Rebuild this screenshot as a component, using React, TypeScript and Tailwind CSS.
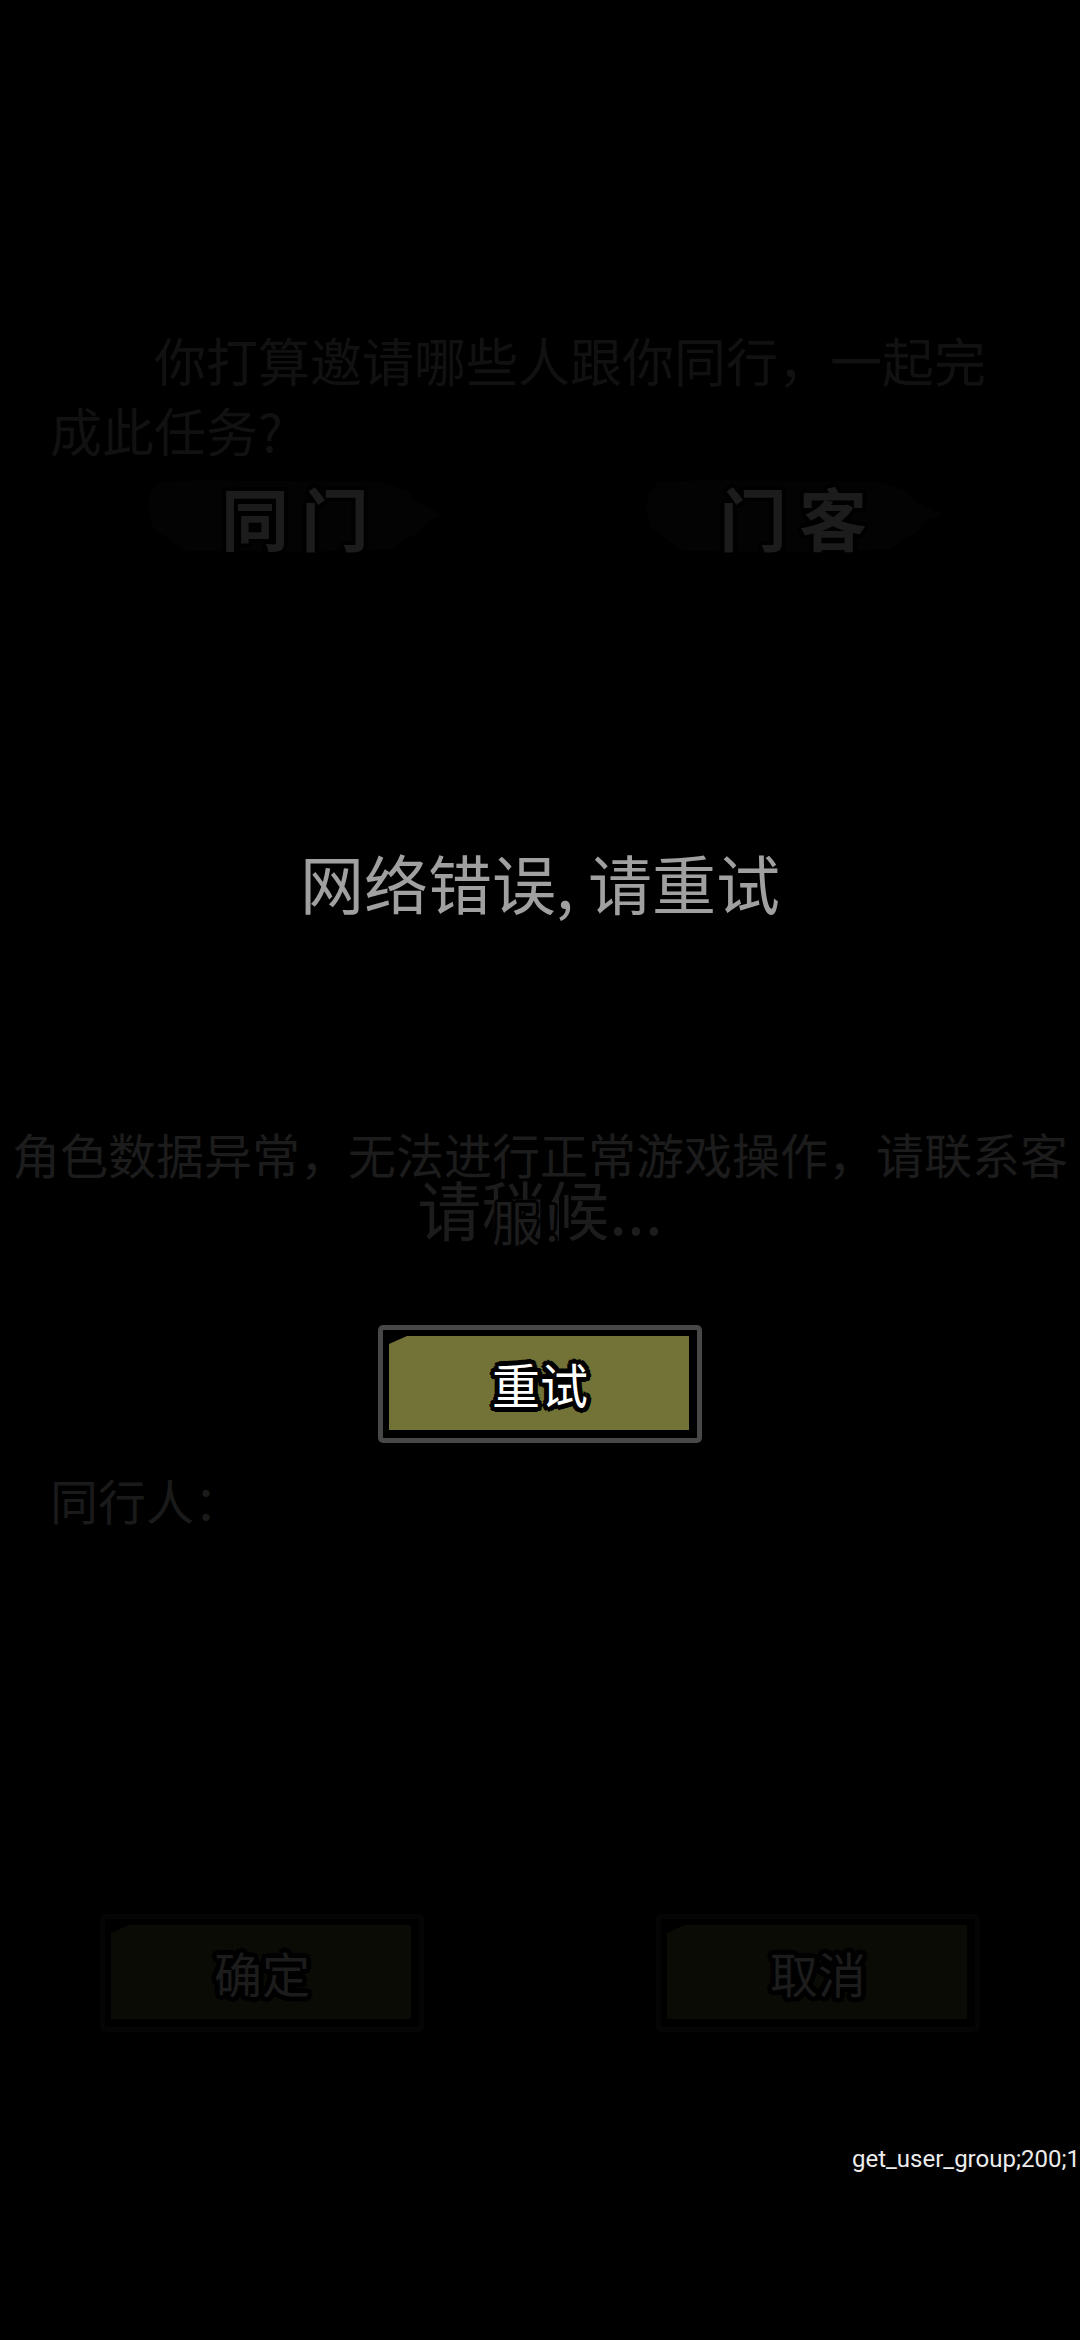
import type { ReactNode } from "react";

function PlateButton({ children, dim = false }: { children: ReactNode; dim?: boolean }) {
  return (
    <button
      type="button"
      className={
        "w-[324px] rounded-[5px] border-[5px] pt-[6px] pr-2 pb-2 pl-[6px] " +
        (dim ? "border-[#050506] text-[#1c1c1c]" : "border-[#484848] text-white")
      }
    >
      <span
        className={
          "flex h-[94px] items-center justify-center pl-0.5 text-[48px] leading-none [clip-path:polygon(18px_0,100%_0,100%_100%,0_100%,0_8px)] [text-shadow:5px_0_#000,4px_3px_#000,3px_4px_#000,0_5px_#000,-3px_4px_#000,-4px_3px_#000,-5px_0_#000,-4px_-3px_#000,-3px_-4px_#000,0_-5px_#000,3px_-4px_#000,4px_-3px_#000] " +
          (dim ? "bg-[#0b0b06]" : "bg-[#737338]")
        }
      >
        {children}
      </span>
    </button>
  );
}

function BrushTab({ first, second }: { first: string; second: string }) {
  return (
    <button type="button" className="relative flex h-20 w-[298px] items-center justify-center">
      <svg aria-hidden="true" viewBox="0 0 298 80" className="absolute inset-0 h-full w-full" fill="#030303">
        <path d="M14 5 L60 3 L150 4 L236 5 L262 14 L270 24 L284 31 L298 38 L282 44 L272 56 L256 64 L248 72 L160 75 L40 74 L22 62 L6 50 L2 34 L4 16 Z" />
      </svg>
      <span className="relative flex gap-3 text-[68px] leading-none font-bold text-[#1c1c1c] [text-shadow:4px_0_#000,3px_3px_#000,0_4px_#000,-3px_3px_#000,-4px_0_#000,-3px_-3px_#000,0_-4px_#000,3px_-3px_#000]">
        <span>{first}</span>
        <span>{second}</span>
      </span>
    </button>
  );
}

export default function App() {
  return (
    <main
      lang="zh-CN"
      className="flex min-h-screen flex-col overflow-hidden bg-black pt-[325px] font-['Noto_Sans_CJK_SC',sans-serif]"
    >
      <p className="px-[50px] indent-[104px] text-[52px] leading-[70px] text-[#111111]">
        你打算邀请哪些人跟你同行，一起完成此任务?
      </p>

      <nav className="mt-3 flex justify-between pr-[138px] pl-[146px]">
        <BrushTab first="同" second="门" />
        <BrushTab first="门" second="客" />
      </nav>

      <h1 className="mt-[276px] text-center text-[64px] leading-[96px] text-[#a0a0a0]">网络错误, 请重试</h1>

      <div className="mt-[191px] grid text-center text-[#1c1c1c]">
        <p className="col-start-1 row-start-1 pt-[39px] text-[64px] leading-[96px]">请稍候...</p>
        <p className="relative col-start-1 row-start-1 text-[48px] leading-[67px] [text-shadow:3px_0_#000,2px_2px_#000,0_3px_#000,-2px_2px_#000,-3px_0_#000,-2px_-2px_#000,0_-3px_#000,2px_-2px_#000]">
          角色数据异常，无法进行正常游戏操作，请联系客服！
        </p>
      </div>

      <div className="mt-[70px] flex justify-center">
        <PlateButton>重试</PlateButton>
      </div>

      <p className="mt-[21px] px-[50px] text-[48px] leading-[70px] text-[#1a1a1a]">同行人：</p>

      <div className="mt-[380px] flex justify-between px-[100px]">
        <PlateButton dim>确定</PlateButton>
        <PlateButton dim>取消</PlateButton>
      </div>

      <p className="mt-[111px] text-right font-['Roboto',sans-serif] text-[24px] leading-8 text-[#ececec]">
        get_user_group;200;1
      </p>
    </main>
  );
}
